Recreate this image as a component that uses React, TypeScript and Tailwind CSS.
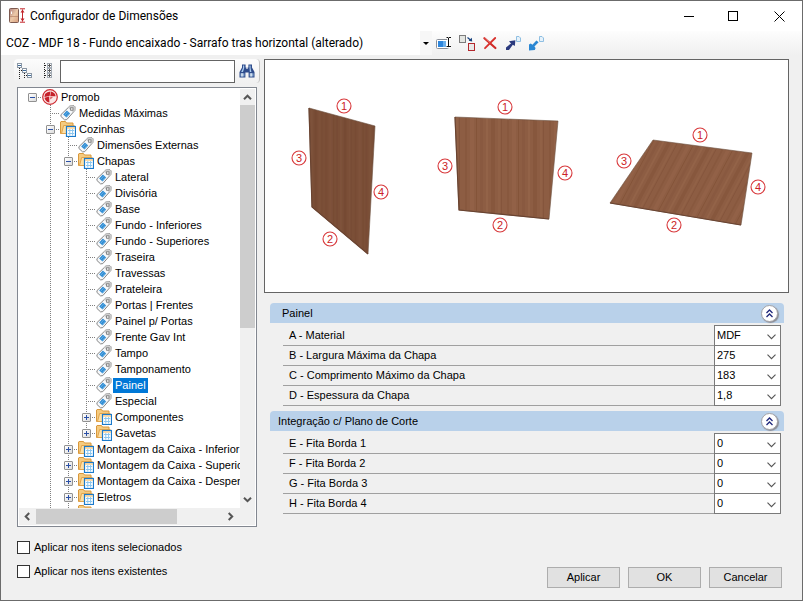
import React from 'react';

type Kind = 'root' | 'folder' | 'tag';

interface Node {
  label: string;
  level: number;
  kind: Kind;
  open?: boolean;
  selected?: boolean;
}

const NODES: Node[] = [
  { label: 'Promob', level: 0, kind: 'root', open: true },
  { label: 'Medidas Máximas', level: 1, kind: 'tag' },
  { label: 'Cozinhas', level: 1, kind: 'folder', open: true },
  { label: 'Dimensões Externas', level: 2, kind: 'tag' },
  { label: 'Chapas', level: 2, kind: 'folder', open: true },
  { label: 'Lateral', level: 3, kind: 'tag' },
  { label: 'Divisória', level: 3, kind: 'tag' },
  { label: 'Base', level: 3, kind: 'tag' },
  { label: 'Fundo - Inferiores', level: 3, kind: 'tag' },
  { label: 'Fundo - Superiores', level: 3, kind: 'tag' },
  { label: 'Traseira', level: 3, kind: 'tag' },
  { label: 'Travessas', level: 3, kind: 'tag' },
  { label: 'Prateleira', level: 3, kind: 'tag' },
  { label: 'Portas | Frentes', level: 3, kind: 'tag' },
  { label: 'Painel p/ Portas', level: 3, kind: 'tag' },
  { label: 'Frente Gav Int', level: 3, kind: 'tag' },
  { label: 'Tampo', level: 3, kind: 'tag' },
  { label: 'Tamponamento', level: 3, kind: 'tag' },
  { label: 'Painel', level: 3, kind: 'tag', selected: true },
  { label: 'Especial', level: 3, kind: 'tag' },
  { label: 'Componentes', level: 3, kind: 'folder', open: false },
  { label: 'Gavetas', level: 3, kind: 'folder', open: false },
  { label: 'Montagem da Caixa - Inferior', level: 2, kind: 'folder', open: false },
  { label: 'Montagem da Caixa - Superior', level: 2, kind: 'folder', open: false },
  { label: 'Montagem da Caixa - Despensa', level: 2, kind: 'folder', open: false },
  { label: 'Eletros', level: 2, kind: 'folder', open: false },
  { label: '', level: 2, kind: 'folder' },
];

const SECTIONS = [
  {
    title: 'Painel',
    indent: 'pl-3',
    rows: [
      ['A - Material', 'MDF'],
      ['B - Largura Máxima da Chapa', '275'],
      ['C - Comprimento Máximo da Chapa', '183'],
      ['D - Espessura da Chapa', '1,8'],
    ],
  },
  {
    title: 'Integração c/ Plano de Corte',
    indent: 'pl-2',
    rows: [
      ['E - Fita Borda 1', '0'],
      ['F - Fita Borda 2', '0'],
      ['G - Fita Borda 3', '0'],
      ['H - Fita Borda 4', '0'],
    ],
  },
];

function TagIcon() {
  return (
    <svg width="16" height="16" viewBox="0 0 16 16" className="shrink-0">
      <path d="M9.8 1 L14 .8 L15 1.8 L14.9 5.4 L6.8 14.6 L4.6 14.9 L.9 11.4 L1 9.6 Z" fill="#f6f8fa" stroke="#858585" />
      <path d="M9.9 1.2 L14 1.1 L14.7 1.9 L14.6 5.3 L13 7.2 L8 2.8 Z" fill="#cfcfcf" />
      <path d="M6.8 5.6 L10.2 8.6 L6.6 12.6 L3.2 9.6 Z" fill="#2f8bd2" />
      <path d="M7.6 7 L4.8 10.2 M9.2 8.4 L6.4 11.6" stroke="#7cc0ee" strokeWidth=".7" />
      <rect x="10.6" y="2.8" width="2.4" height="2.4" fill="#fff" stroke="#7a7a7a" strokeWidth=".9" />
    </svg>
  );
}

function FolderIcon() {
  return (
    <svg width="16" height="16" viewBox="0 0 16 16" className="shrink-0">
      <path d="M.5 12.5 V1 L1 .5 H5.5 L6.5 2 H13 V12.5 Z" fill="#f5cb80" stroke="#d9983c" />
      <path d="M1.5 12.5 L3.6 4.5 H14.2 L13 12.5 Z" fill="#fde0a6" stroke="#e2a54c" />
      <rect x="6.5" y="5.5" width="9" height="10" fill="#fff" stroke="#1b7acb" strokeWidth="1.2" />
      <path d="M7 7 H15" stroke="#f3b75a" />
      <path d="M8 9.5 H14.2 M8 12.5 H14.2 M9.8 8 V14.6 M12.6 8 V14.6" stroke="#8cc6ee" />
    </svg>
  );
}

function PromobIcon() {
  return (
    <svg width="16" height="16" viewBox="1 0 16 16" className="shrink-0">
      <circle cx="9" cy="8" r="7.3" fill="#fbe6e6" stroke="#cf2b31" strokeWidth="1.2" />
      <path d="M4 5 Q6 2.6 9.5 2.4 L8.6 7 L3.4 8 Z" fill="#c5202a" />
      <path d="M10 2.4 Q14.2 3.4 14.6 7.2 L9.2 7.2 Z" fill="#c5202a" />
      <path d="M3.5 8.7 L8.2 7.6 L8.4 13.4 Q4.4 12.8 3.5 8.7 Z" fill="#c5202a" />
      <path d="M9.3 8 L12 8.2 L9.2 10.6 Z" fill="#d9565c" />
    </svg>
  );
}

function Guide({ shape }: { shape: 'none' | 'line' | 'tee' | 'end' | 'stub' }) {
  const horizontal = shape === 'tee' || shape === 'end' || shape === 'stub';
  const vertical = shape === 'line' || shape === 'tee' || shape === 'end';
  return (
    <svg width="18" height="16" viewBox="0 0 18 16" shapeRendering="crispEdges" className="shrink-0" stroke="#808080">
      {vertical && <path d={shape === 'end' ? 'M9.5 0 V8' : 'M9.5 0 V16'} strokeDasharray="1 1" fill="none" />}
      {horizontal && <path d="M9 8.5 H18" strokeDasharray="1 1" fill="none" />}
    </svg>
  );
}

function Toggle({ open }: { open: boolean }) {
  return (
    <button
      aria-label={open ? 'Recolher' : 'Expandir'}
      className="absolute left-[5px] top-[4px] h-[9px] w-[9px] rounded-[1px] border border-[#919191] bg-linear-to-br from-white to-[#dcdcdc]"
    >
      <svg viewBox="0 0 7 7" className="block h-[7px] w-[7px]" shapeRendering="crispEdges" stroke="#2a4fa5">
        <path d={open ? 'M1 3.5 H6' : 'M1 3.5 H6 M3.5 1 V6'} />
      </svg>
    </button>
  );
}

function TreeRow({ node, index }: { node: Node; index: number }) {
  const lastAtDepth = node.level === 3 && (NODES[index + 1]?.level ?? 0) < 3;
  return (
    <li
      role="treeitem"
      aria-selected={!!node.selected}
      aria-expanded={node.open}
      className="flex h-4 items-center whitespace-nowrap"
    >
      {Array.from({ length: node.level }, (_, i) => (
        <Guide key={i} shape={i === 0 ? 'none' : 'line'} />
      ))}
      <span className="relative flex shrink-0">
        <Guide shape={node.level === 0 ? 'stub' : lastAtDepth ? 'end' : 'tee'} />
        {node.open !== undefined && <Toggle open={node.open} />}
      </span>
      <span className="flex w-[18px] shrink-0 justify-center">
        {node.kind === 'root' ? <PromobIcon /> : node.kind === 'folder' ? <FolderIcon /> : <TagIcon />}
      </span>
      {node.label && (
        <span className={node.selected ? 'bg-[#0078d7] px-[2px] text-white' : 'px-[2px]'}>{node.label}</span>
      )}
    </li>
  );
}

function Arrow({ d }: { d: string }) {
  return (
    <svg width="9" height="9" viewBox="0 0 9 9" fill="none" stroke="#555" strokeWidth="2">
      <path d={d} />
    </svg>
  );
}

const BOARDS = [
  { points: '309,108 375,126 368,254 312,207', fill: 'url(#woodDark)', edge: 'M309 108 L312 207 L368 254' },
  { points: '455,117 558,121 549,219 459,210', fill: 'url(#wood)', edge: 'M455 117 L459 210 L549 219' },
  { points: '653,140 752,153 741,225 610,203', fill: 'url(#woodFlat)', edge: 'M610 203 L741 225' },
];

const MARKS: [number, number, number][] = [
  [1, 344, 106], [2, 330, 239], [3, 299, 158], [4, 381, 192],
  [1, 505, 107], [2, 500, 225], [3, 445, 166], [4, 565, 173],
  [1, 700, 135], [2, 674, 225], [3, 624, 161], [4, 758, 187],
];

function Grain() {
  return (
    <>
      <rect width="42" height="300" fill="#8d5d43" />
      <rect x="3" width="2" height="300" fill="#88583e" />
      <rect x="8" width="4" height="300" fill="#926147" />
      <rect x="14" width="1" height="300" fill="#845439" />
      <rect x="18" width="3" height="300" fill="#895940" />
      <rect x="24" width="2" height="300" fill="#936348" />
      <rect x="29" width="4" height="300" fill="#87573d" />
      <rect x="36" width="2" height="300" fill="#916146" />
      <rect x="39" width="1" height="300" fill="#85553c" />
    </>
  );
}

function Preview() {
  return (
    <svg viewBox="265 60 523 232" className="h-full w-full" role="img" aria-label="Fitas de borda do painel">
      <defs>
        <pattern id="wood" width="42" height="300" patternUnits="userSpaceOnUse"><Grain /></pattern>
        <pattern id="woodDark" width="42" height="300" patternUnits="userSpaceOnUse" patternTransform="scale(.7 1)">
          <Grain />
          <rect width="42" height="300" fill="#3a1c0c" opacity=".22" />
        </pattern>
        <pattern id="woodFlat" width="42" height="300" patternUnits="userSpaceOnUse" patternTransform="skewX(-28)"><Grain /></pattern>
      </defs>
      {BOARDS.map((b) => (
        <g key={b.points}>
          <polygon points={b.points} fill={b.fill} stroke="#6b5140" strokeWidth=".6" />
          <path d={b.edge} fill="none" stroke="#6a4330" strokeWidth="1.2" />
        </g>
      ))}
      {MARKS.map(([n, x, y]) => (
        <g key={`${x}-${y}`}>
          <circle cx={x} cy={y} r="7" fill="#fff" stroke="#d8393c" strokeWidth="1.1" />
          <text x={x} y={y + 4} textAnchor="middle" fontSize="11" fill="#cc2226">{n}</text>
        </g>
      ))}
    </svg>
  );
}

function ValueRow({ label, value }: { label: string; value: string }) {
  const id = `campo-${label[0]}`;
  return (
    <div className="flex h-5">
      <label htmlFor={id} className="flex flex-1 items-center border-b border-[#a0a0a0] pl-[6px]">{label}</label>
      <div className="relative -mt-px h-[21px] w-[67px] border border-[#7a7a7a] bg-white">
        <select id={id} defaultValue={value} className="block h-[19px] w-full appearance-none bg-transparent pl-[2px] text-[11px] leading-[19px] outline-none">
          <option>{value}</option>
        </select>
        <svg width="9" height="6" viewBox="0 0 9 6" className="pointer-events-none absolute right-[4px] top-[8px]" fill="none" stroke="#555" strokeWidth="1.1">
          <path d="M.5 .7 L4.5 4.7 L8.5 .7" />
        </svg>
      </div>
    </div>
  );
}

function ToolbarIcons() {
  return (
    <div className="flex items-center gap-[7px] pl-1">
      <button aria-label="Renomear" className="h-4 w-4">
        <svg width="16" height="16" viewBox="0 0 16 16" fill="none">
          <rect x=".5" y="4.5" width="12" height="9" rx="1" fill="#fff" stroke="#8a8f98" />
          <rect x="2" y="6" width="8" height="6" fill="#2e86dc" />
          <rect x="7" y="6" width="3" height="6" fill="#6cb0ec" />
          <path d="M10.5 2.5 H12 L12.5 3 L13 2.5 H15 M12.5 3 V11 M10.5 11.5 H15" stroke="#fff" strokeWidth="2.4" />
          <path d="M10.5 2.5 H12 L12.5 3 L13 2.5 H15 M12.5 3 V11 M10.5 11.5 H15" stroke="#111" />
        </svg>
      </button>
      <button aria-label="Duplicar" className="h-4 w-4">
        <svg width="16" height="16" viewBox="0 0 16 16" fill="none">
          <rect x=".5" y=".5" width="6" height="7" fill="#e4e6e2" stroke="#7c7c7c" />
          <path d="M8.5 2.5 L11.5 5" stroke="#17427e" strokeWidth="1.2" />
          <path d="M13.2 6.4 L9.6 5.8 L12.8 2.8 Z" fill="#17427e" />
          <rect x="9.5" y="8.5" width="6" height="7" fill="#e9e9e9" stroke="#b3282d" />
        </svg>
      </button>
      <button aria-label="Excluir" className="h-4 w-4">
        <svg width="16" height="16" viewBox="0 0 16 16" fill="none" strokeLinecap="round">
          <path d="M2.4 3.2 L13.4 13" stroke="#cf2a27" strokeWidth="2.2" />
          <path d="M13.2 3 L3 13.2" stroke="#d8302c" strokeWidth="1.8" />
          <path d="M2.6 3 L7.6 7.4" stroke="#ee726c" strokeWidth=".8" />
        </svg>
      </button>
      <button aria-label="Exportar" className="h-4 w-4">
        <svg width="16" height="16" viewBox="0 0 16 16" fill="none">
          <path d="M11.5 1.5 H14 L15.5 3 V6.5 H11.5 Z" fill="#e6f2fb" stroke="#8fbfe2" />
          <path d="M1 12.4 L6 8.4 L4 6.2 L10.4 5.2 L9.8 11 L7.8 9.8 L4 15 L1 15 Z" fill="#2b3a7e" />
        </svg>
      </button>
      <button aria-label="Importar" className="h-4 w-4">
        <svg width="16" height="16" viewBox="0 0 16 16" fill="none">
          <path d="M11.5 1.5 H14 L15.5 3 V6.5 H11.5 Z" fill="#e6f2fb" stroke="#8fbfe2" />
          <path d="M8.4 5.4 L4.4 9.8 L2.8 8.4 L1 9.4 L1 15.4 L6.8 15 L7.6 13 L6.4 11.6 L10.6 7.2 Z" fill="#2b87d3" />
        </svg>
      </button>
    </div>
  );
}

export default function App() {
  return (
    <div className="flex h-screen flex-col border border-[#6b6b6b] bg-[#f0f0f0] font-['Liberation_Sans',sans-serif] text-[11px] leading-[15px] text-black">
      <header className="flex h-[30px] shrink-0 items-center bg-white pl-2 font-[Roboto,sans-serif] text-[12px]">
        <svg width="16" height="16" viewBox="0 0 16 16" fill="none" className="mr-[5px]">
          <defs>
            <linearGradient id="cab" x1="0" y1="0" x2="1" y2="1">
              <stop offset="0" stopColor="#b08080" />
              <stop offset=".5" stopColor="#ecc9a8" />
              <stop offset="1" stopColor="#d79d7c" />
            </linearGradient>
          </defs>
          <rect x=".5" y=".5" width="9" height="14" rx="1" fill="url(#cab)" stroke="#7d5a50" />
          <path d="M1 8.5 H9" stroke="#b98468" strokeWidth=".7" />
          <path d="M2.5 3.5 V6" stroke="#fff" />
          <path d="M11 .8 H16 M11 14.2 H16 M13.5 1.5 V13.5" stroke="#c2252b" />
          <path d="M11.5 4.5 L13.5 1.5 L15.5 4.5 Z M11.5 10.5 L13.5 13.5 L15.5 10.5 Z" fill="#c2252b" />
        </svg>
        <h1 className="flex-1">Configurador de Dimensões</h1>
        <button aria-label="Minimizar" className="flex h-full w-[46px] items-center justify-center">
          <svg width="11" height="11" viewBox="0 0 11 11" stroke="#000" shapeRendering="crispEdges"><path d="M.5 5.5 H10.5" /></svg>
        </button>
        <button aria-label="Maximizar" className="flex h-full w-[45px] items-center justify-center">
          <svg width="11" height="11" viewBox="0 0 11 11" stroke="#000" fill="none" shapeRendering="crispEdges"><rect x=".5" y=".5" width="9" height="9" /></svg>
        </button>
        <button aria-label="Fechar" className="flex h-full w-[46px] items-center justify-center">
          <svg width="11" height="11" viewBox="0 0 11 11" stroke="#000" fill="none"><path d="M.5 .5 L10.5 10.5 M10.5 .5 L.5 10.5" /></svg>
        </button>
      </header>

      <div className="flex h-6 shrink-0 items-center bg-linear-to-b from-[#fdfdfd] to-[#f0f0f0]">
        <div className="relative flex h-full w-[431px]">
          <select aria-label="Configuração" className="h-full w-full appearance-none bg-white pl-[5px] font-[Roboto,sans-serif] text-[12px] outline-none">
            <option>COZ - MDF 18 - Fundo encaixado - Sarrafo tras horizontal (alterado)</option>
          </select>
          <span className="pointer-events-none absolute right-0 top-0 flex h-full w-3 items-center justify-center bg-[#f7f7f7]">
            <span className="border-x-[3px] border-t-[3px] border-x-transparent border-t-black" />
          </span>
        </div>
        <ToolbarIcons />
      </div>

      <div className="flex min-h-0 flex-1 gap-1 pl-[13px] pr-[13px] pt-1">
        <div className="flex w-[246px] shrink-0 flex-col pb-[22px]">
          <div className="flex h-6 shrink-0 items-center rounded-sm border-r border-[#c4c4c4] bg-linear-to-b from-[#fcfcfc] to-[#f0f0f0] pl-[3px]">
            <button aria-label="Recolher tudo" className="mr-[7px] h-4 w-4">
              <svg width="16" height="16" viewBox="0 0 16 16" fill="none" shapeRendering="crispEdges">
                <path d="M2.5 5 V16 M7.5 10 V16 M2 7.5 H5 M7 12.5 H10" stroke="#222" strokeDasharray="1 1" />
                <g stroke="#8b97a5" fill="#fff">
                  <rect x=".5" y=".5" width="4" height="4" /><rect x="5.5" y="5.5" width="4" height="4" /><rect x="10.5" y="10.5" width="4" height="4" />
                  <path d="M1 2.5 H4 M6 7.5 H9 M11 12.5 H14" stroke="#3f6d9b" />
                </g>
              </svg>
            </button>
            <button aria-label="Expandir tudo" className="mr-[4px] h-4 w-4">
              <svg width="16" height="16" viewBox="0 0 16 16" fill="none" shapeRendering="crispEdges">
                <path d="M4.5 0 V16 M5 2.5 H8 M5 7.5 H8 M5 12.5 H8" stroke="#222" strokeDasharray="1 1" />
                <g stroke="#a3abb4" fill="#fff">
                  <rect x="7.5" y=".5" width="4" height="4" /><rect x="7.5" y="5.5" width="4" height="4" /><rect x="7.5" y="10.5" width="4" height="4" />
                  <path d="M8 2.5 H11 M9.5 1 V4 M8 7.5 H11 M9.5 6 V9 M8 12.5 H11 M9.5 11 V14" stroke="#555" />
                </g>
              </svg>
            </button>
            <input aria-label="Pesquisar" className="h-[23px] min-w-0 flex-1 border border-[#646464] bg-white px-1 outline-none" />
            <button aria-label="Localizar" className="mx-[4px] h-4 w-4">
              <svg width="16" height="16" viewBox="0 0 16 16">
                <path d="M3 1.5 H6.6 V4.5 H7.4 V6 H8.6 V4.5 H9.4 V1.5 H13 V4.5 L15.5 9 V14.5 H9.6 V9.5 H6.4 V14.5 H.5 V9 L3 4.5 Z" fill="#2f4c8c" />
                <path d="M4 2.5 H5.2 V5 L4 9 H2.2 L4 5 Z M10.4 2.5 H11.6 V5 L12.4 9 H10.8 Z" fill="#a9cbee" />
                <path d="M1.5 10.2 H5.4 V13.6 H1.5 Z M10.6 10.2 H14.5 V13.6 H10.6 Z" fill="#8aa9cf" />
                <path d="M2.4 10.2 H3.6 V13.6 H2.4 Z M11.5 10.2 H12.7 V13.6 H11.5 Z" fill="#eef6fc" />
              </svg>
            </button>
          </div>

          <div className="mx-[3px] mt-1 flex min-h-0 flex-1 flex-col border border-[#828790] bg-white">
            <div className="flex min-h-0 flex-1 p-px pb-0">
              <ul role="tree" aria-label="Itens" className="min-w-0 flex-1 overflow-hidden pl-[4px]">
                {NODES.map((n, i) => <TreeRow key={i} node={n} index={i} />)}
              </ul>
              <div className="flex w-[15px] flex-col bg-[#f0f0f0]">
                <button aria-label="Rolar para cima" className="flex h-4 shrink-0 items-center justify-center">
                  <Arrow d="M1 6.2 L4.5 2.7 L8 6.2" />
                </button>
                <div className="flex-1"><div className="h-[58%] bg-[#cdcdcd]" /></div>
                <button aria-label="Rolar para baixo" className="flex h-[18px] shrink-0 items-center justify-center">
                  <Arrow d="M1 2.7 L4.5 6.2 L8 2.7" />
                </button>
              </div>
            </div>
            <div className="mx-px mb-px flex h-[17px] shrink-0 items-center bg-[#f0f0f0] pr-[15px]">
              <button aria-label="Rolar para a esquerda" className="flex h-full w-[17px] items-center justify-center">
                <Arrow d="M6.2 1 L2.7 4.5 L6.2 8" />
              </button>
              <div className="h-[15px] flex-1"><div className="h-full w-[76%] bg-[#cdcdcd]" /></div>
              <button aria-label="Rolar para a direita" className="flex h-full w-[19px] items-center justify-center">
                <Arrow d="M2.7 1 L6.2 4.5 L2.7 8" />
              </button>
            </div>
          </div>

          <div className="ml-[3px] mt-[13px] flex flex-col gap-[10px]">
            {['Aplicar nos itens selecionados', 'Aplicar nos itens existentes'].map((t) => (
              <label key={t} className="flex h-[14px] items-center gap-1">
                <input type="checkbox" className="h-[13px] w-[13px] appearance-none border border-[#333] bg-white" />
                {t}
              </label>
            ))}
          </div>
        </div>

        <main className="flex min-w-0 flex-1 flex-col pb-3">
          <div className="h-[234px] shrink-0 border border-[#646464] bg-white">
            <Preview />
          </div>
          <div className="mt-[10px] flex flex-col gap-[5px] pl-[6px] pr-[5px]">
            {SECTIONS.map((s) => (
              <section key={s.title}>
                <div className={`flex h-5 items-center justify-between rounded-t-[4px] bg-[#b9d1ea] pr-[6px] ${s.indent}`}>
                  <h2>{s.title}</h2>
                  <button aria-label="Recolher seção" className="flex h-[17px] w-[17px] items-center justify-center rounded-full border border-[#a3a3a8] bg-white shadow-[1px_1px_1px_#8b8b93]">
                    <svg width="9" height="9" viewBox="0 0 9 9" fill="none" stroke="#20287c" strokeWidth="1.3">
                      <path d="M1.5 4 L4.5 1 L7.5 4 M1.5 8 L4.5 5 L7.5 8" />
                    </svg>
                  </button>
                </div>
                <div className="mt-[3px] pl-[13px] pr-[3px]">
                  {s.rows.map(([l, v]) => <ValueRow key={l} label={l} value={v} />)}
                </div>
              </section>
            ))}
          </div>
          <div className="mt-auto flex justify-end gap-2 pr-[7px]">
            {['Aplicar', 'OK', 'Cancelar'].map((t) => (
              <button key={t} className="h-[21px] w-[73px] border border-[#adadad] bg-[#e1e1e1] text-[11px] leading-[19px]">{t}</button>
            ))}
          </div>
        </main>
      </div>
    </div>
  );
}
